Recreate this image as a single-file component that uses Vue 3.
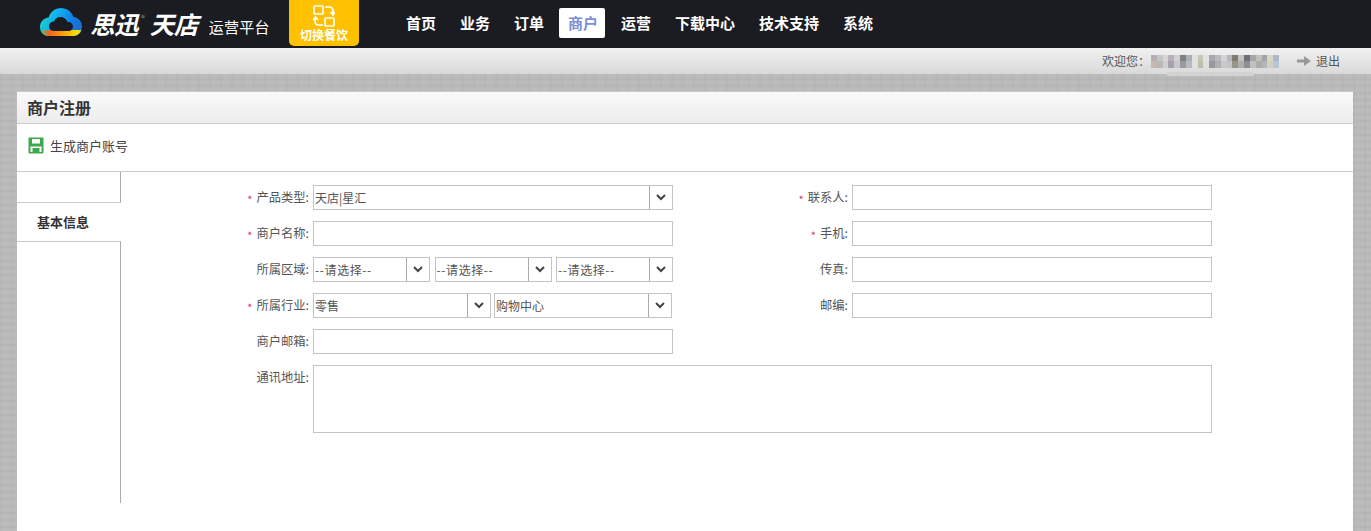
<template>
  <div class="page">
    <header class="topbar">
      <div class="logo">
        <svg class="cloud" width="42" height="28" viewBox="0 0 42 28">
          <defs>
            <linearGradient id="cloudTop" x1="0" y1="0.2" x2="1" y2="0.5">
              <stop offset="0" stop-color="#1fd8b8" />
              <stop offset="0.35" stop-color="#12b4ee" />
              <stop offset="0.75" stop-color="#0f7fe6" />
              <stop offset="1" stop-color="#1a6fd0" />
            </linearGradient>
            <linearGradient id="cloudBottom" x1="0" y1="0" x2="1" y2="0">
              <stop offset="0" stop-color="#30d090" />
              <stop offset="0.22" stop-color="#f0651e" />
              <stop offset="0.6" stop-color="#fda90a" />
              <stop offset="0.9" stop-color="#f8e010" />
              <stop offset="1" stop-color="#a0d040" />
            </linearGradient>
            <clipPath id="cloudBand">
              <rect x="0" y="22" width="42" height="6" />
            </clipPath>
          </defs>
          <path d="M9 28 C3 28 0 23.500 0 19 C0 13.500 4 10 8.500 9.500 C10.500 4 15 0 21 0 C27 0 31.500 3.500 33.500 9 C38.500 9.500 42 13.500 42 18.500 C42 23.500 38.500 28 33 28 Z" fill="url(#cloudTop)" />
          <path d="M9 28 C3 28 0 23.500 0 19 C0 13.500 4 10 8.500 9.500 C10.500 4 15 0 21 0 C27 0 31.500 3.500 33.500 9 C38.500 9.500 42 13.500 42 18.500 C42 23.500 38.500 28 33 28 Z" fill="url(#cloudBottom)" clip-path="url(#cloudBand)" />
          <path d="M14 23 C10.500 23 9 20.500 9 18.500 C9 15.500 11 13.500 14 13.500 C15 10.500 17.500 9 20.500 9 C24 9 26.500 11 27.500 14 C31 14 33 16 33 18.500 C33 21 31 23 28.500 23 Z" fill="#1b1c21" />
        </svg>
        <span class="brand">思迅</span>
        <span class="reg">®</span>
        <span class="brand">天店</span>
        <span class="platform">运营平台</span>
      </div>
      <div class="switch-btn">
        <svg width="22" height="22" viewBox="0 0 22 22" fill="none" stroke="#fff" stroke-width="1.700">
          <rect x="1" y="1" width="9" height="8" rx="1" />
          <rect x="12" y="13" width="9" height="8" rx="1" />
          <path d="M12 2 H16 Q20 2 20 6 V9 M17.500 7 L20 10 L22 7" />
          <path d="M10 20 H6 Q2 20 2 16 V13 M0 15 L2.500 12 L5 15" />
        </svg>
        <span>切换餐饮</span>
      </div>
      <nav class="nav">
        <a v-for="item in navItems" :key="item" :class="['nav-item', { active: item === '商户' }]">{{ item }}</a>
      </nav>
    </header>

    <div class="subbar">
      <span class="welcome">欢迎您：</span>
      <span class="mosaic">
        <i v-for="(c, i) in mosaic" :key="i" :style="{ background: c }"></i>
      </span>
      <svg class="exit-arrow" width="14" height="10" viewBox="0 0 14 10">
        <path d="M0 3.500 H7 V0 L14 5 L7 10 V6.500 H0 Z" fill="#999" />
      </svg>
      <span class="logout">退出</span>
    </div>

    <main class="panel">
      <div class="panel-title">商户注册</div>
      <div class="toolbar">
        <svg width="16" height="17" viewBox="0 0 16 17">
          <path d="M1.500 0.500 H14.500 Q15.500 0.500 15.500 1.500 V15.500 Q15.500 16.500 14.500 16.500 H1.500 Q0.500 16.500 0.500 15.500 V1.500 Q0.500 0.500 1.500 0.500 Z" fill="#3fa84a" />
          <rect x="4" y="2" width="8" height="4.500" fill="#fff" />
          <rect x="2.500" y="9.500" width="11" height="5.500" fill="#fff" />
          <rect x="4.500" y="11" width="7" height="4" fill="#3fa84a" />
        </svg>
        <span>生成商户账号</span>
      </div>

      <div class="content">
        <aside class="side">
          <div class="side-empty"></div>
          <div class="side-tab">基本信息</div>
          <div class="side-rest"></div>
        </aside>

        <form class="form">
          <label class="lbl"><em>*</em>产品类型:</label>
          <div class="select">
            <span class="select-text">天店|星汇</span>
            <span class="select-arrow"><svg width="10" height="7" viewBox="0 0 10 7"><path d="M1 1 L5 5 L9 1" fill="none" stroke="#444" stroke-width="2" /></svg></span>
          </div>
          <label class="lbl"><em>*</em>联系人:</label>
          <input class="inp" type="text" />

          <label class="lbl"><em>*</em>商户名称:</label>
          <input class="inp" type="text" />
          <label class="lbl"><em>*</em>手机:</label>
          <input class="inp" type="text" />

          <label class="lbl">所属区域:</label>
          <div class="group three">
            <div v-for="n in 3" :key="n" class="select">
              <span class="select-text placeholder">--请选择--</span>
              <span class="select-arrow"><svg width="10" height="7" viewBox="0 0 10 7"><path d="M1 1 L5 5 L9 1" fill="none" stroke="#444" stroke-width="2" /></svg></span>
            </div>
          </div>
          <label class="lbl">传真:</label>
          <input class="inp" type="text" />

          <label class="lbl"><em>*</em>所属行业:</label>
          <div class="group two">
            <div v-for="t in industry" :key="t" class="select">
              <span class="select-text">{{ t }}</span>
              <span class="select-arrow"><svg width="10" height="7" viewBox="0 0 10 7"><path d="M1 1 L5 5 L9 1" fill="none" stroke="#444" stroke-width="2" /></svg></span>
            </div>
          </div>
          <label class="lbl">邮编:</label>
          <input class="inp" type="text" />

          <label class="lbl">商户邮箱:</label>
          <input class="inp" type="text" />
          <span></span>
          <span></span>

          <label class="lbl lbl-top">通讯地址:</label>
          <textarea class="area"></textarea>
        </form>
      </div>
    </main>
  </div>
</template>

<script setup>
const navItems = ['首页', '业务', '订单', '商户', '运营', '下载中心', '技术支持', '系统']
const industry = ['零售', '购物中心']

// pixelated user name, two rows of blocks
const mosaic = [
  '#b5aeb6', '#c4c5c9', '#d6d6d6', '#b8b0ba', '#d2d2d4', '#7f8085', '#a9b0b8', '#e1e1e1', '#c6c8b6', '#e2e2e2', '#a9a7ac',
  '#bbbabb', '#d4d4d4', '#b5b5bc', '#7e7a70', '#c3c3c0', '#6e7078', '#a5a6aa', '#c0c0ba', '#a0a4aa', '#d9d4c4', '#aab8cc',
  '#c4bab0', '#b6b8bc', '#d0d0d0', '#a8a2ac', '#c8c8cc', '#9a9a9c', '#b8bcc0', '#e0e0e0', '#bcbea8', '#e0e0e0', '#9a989e',
  '#b0aeb0', '#c8c8c8', '#c4c4c8', '#989488', '#b0b0aa', '#8e8e94', '#c0c0c2', '#adada4', '#b2b6bc', '#d2d0c0', '#b8c4d4'
]
</script>

<style>
html,
body {
  margin: 0;
  overflow: hidden;
}
</style>

<style scoped>
.page {
  width: 1371px;
  height: 531px;
  overflow: hidden;
  font-family: "Noto Sans CJK SC", "Liberation Sans", sans-serif;
  font-size: 12px;
  color: #444;
  background-color: #bababa;
  background-image:
    repeating-linear-gradient(0deg, rgba(255, 255, 255, 0.045) 0 1px, transparent 1px 3px, rgba(0, 0, 0, 0.02) 3px 5px, transparent 5px 7px),
    repeating-linear-gradient(90deg, rgba(0, 0, 0, 0.02) 0 2px, transparent 2px 5px, rgba(255, 255, 255, 0.03) 5px 6px, transparent 6px 11px);
}

.topbar {
  height: 48px;
  background: #1b1c21;
  display: flex;
  align-items: flex-start;
}

.logo {
  width: 289px;
  height: 48px;
  display: flex;
  align-items: center;
  padding-left: 40px;
  box-sizing: border-box;
  color: #fff;
}

.cloud {
  flex: none;
  margin: -4px 8px 0 0;
}

.brand {
  font-size: 24.500px;
  font-weight: 700;
  font-style: italic;
  letter-spacing: -0.500px;
  line-height: 46px;
  white-space: nowrap;
}

.reg {
  font-size: 8px;
  color: #999;
  margin: -14px 5px 0 3px;
}

.platform {
  font-size: 15px;
  letter-spacing: 0.200px;
  margin: 6px 0 0 11px;
  line-height: 24px;
  white-space: nowrap;
}

.switch-btn {
  width: 70px;
  height: 46px;
  background: #ffc000;
  border-radius: 0 0 5px 5px;
  color: #fff;
  font-size: 12px;
  font-weight: 700;
  display: flex;
  flex-direction: column;
  align-items: center;
  gap: 1px;
  padding-top: 5px;
  box-sizing: border-box;
  line-height: 14px;
}

.nav {
  display: flex;
  margin-left: 35px;
  padding-top: 8px;
}

.nav-item {
  font-size: 15px;
  font-weight: 700;
  color: #fff;
  height: 30px;
  line-height: 29px;
  padding: 0 12px;
  white-space: nowrap;
}

.nav-item.active {
  background: #fff;
  color: #7a8fd8;
  border-radius: 2px;
  padding: 0 7px 0 9px;
  margin: 0 4px 0 3px;
}

.subbar {
  height: 26px;
  background: linear-gradient(#f1f1f1, #d9d9d9);
  display: flex;
  align-items: center;
  justify-content: flex-end;
  padding-right: 31px;
  color: #555;
  line-height: 26px;
  position: relative;
}

/* faint smudge under the pixelated name */
.subbar::after {
  content: "";
  position: absolute;
  left: 1167px;
  top: 24px;
  width: 87px;
  height: 4px;
  background: #d2d2d2;
}

.mosaic {
  width: 128px;
  height: 13px;
  display: grid;
  grid-template-columns: repeat(22, 1fr);
  grid-auto-rows: 6.500px;
  margin-left: 1px;
}

.mosaic i {
  display: block;
}

.exit-arrow {
  margin: 0 5px 0 18px;
}

.panel {
  margin: 17px 18px 0 17px;
  height: 440px;
  background: #fff;
  display: flex;
  flex-direction: column;
}

.panel-title {
  height: 31px;
  line-height: 30px;
  padding-left: 10px;
  font-size: 16px;
  font-weight: 700;
  color: #333;
  background: linear-gradient(#f9f9f9, #ededed);
  border-top: 1px solid #ccc;
  border-bottom: 1px solid #ccc;
}

.toolbar {
  height: 48px;
  display: flex;
  align-items: flex-start;
  gap: 6px;
  padding: 13px 0 0 11px;
  box-sizing: border-box;
  border-bottom: 1px solid #ccc;
  font-size: 13px;
  color: #444;
  line-height: 18px;
}

.content {
  display: flex;
}

.side {
  width: 104px;
  height: 331px;
  display: flex;
  flex-direction: column;
  flex: none;
}

.side-empty {
  height: 30px;
  border-right: 1px solid #aaa;
  border-bottom: 1px solid #ccc;
}

.side-tab {
  height: 38px;
  line-height: 38px;
  padding-left: 20px;
  font-size: 13px;
  font-weight: 700;
  color: #333;
}

.side-rest {
  flex: 1;
  border-right: 1px solid #aaa;
  border-top: 1px solid #ccc;
}

.form {
  display: grid;
  grid-template-columns: 80px 360px 179px 360px;
  grid-auto-rows: 25px;
  row-gap: 11px;
  padding: 13px 0 0 112px;
}

.lbl {
  text-align: right;
  padding-right: 4px;
  line-height: 25px;
  font-size: 12.300px;
  color: #555;
  white-space: nowrap;
}

.lbl em {
  color: #e8305a;
  font-style: normal;
  font-size: 11px;
  margin-right: 4px;
  vertical-align: -2px;
}

.lbl-top {
  line-height: 24px;
}

.inp,
.select,
.area {
  border: 1px solid #c4c4c4;
  box-sizing: border-box;
  background: #fff;
  margin: 0;
  padding: 0;
}

.inp {
  width: 360px;
  height: 25px;
}

.area {
  grid-column: 2 / 5;
  height: 68px;
  resize: none;
}

.select {
  height: 25px;
  display: flex;
  min-width: 0;
  color: #555;
  line-height: 23px;
}

.select-text {
  flex: 1;
  padding-left: 1px;
  white-space: nowrap;
  overflow: hidden;
}

.select-text.placeholder {
  letter-spacing: 0.600px;
}

.select-arrow {
  width: 22px;
  flex: none;
  display: flex;
  align-items: center;
  justify-content: center;
  border-left: 1px solid #aaa;
}

.group {
  display: grid;
}

.group.three {
  grid-template-columns: repeat(3, 117px);
  justify-content: space-between;
}

.group.two {
  grid-template-columns: repeat(2, 178px);
  column-gap: 3px;
}
</style>
